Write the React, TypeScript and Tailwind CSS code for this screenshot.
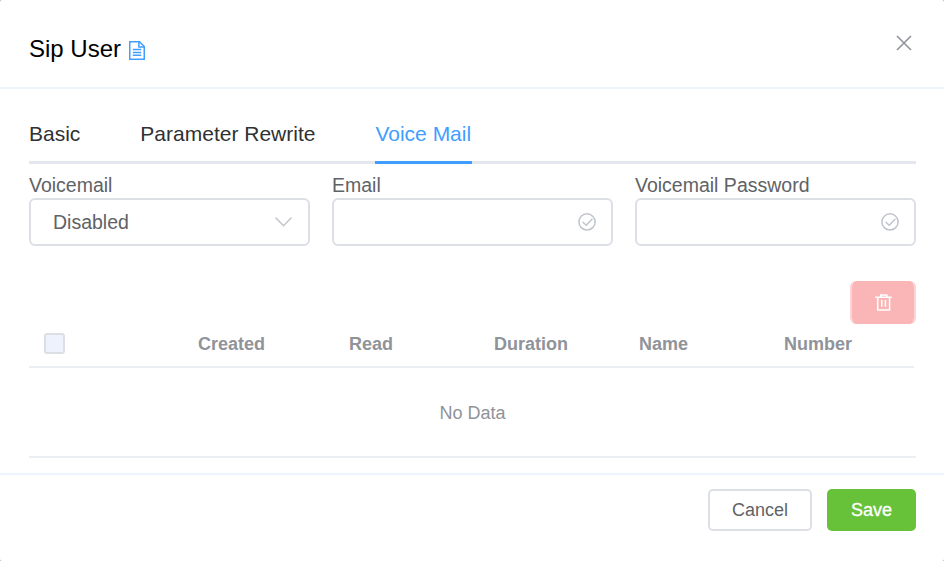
import React from "react";

const columns = [
  { label: "Created", width: "w-[151px]" },
  { label: "Read", width: "w-[145px]" },
  { label: "Duration", width: "w-[145px]" },
  { label: "Name", width: "w-[145px]" },
  { label: "Number", width: "w-[130px]" },
];

function DocumentIcon() {
  return (
    <svg className="mt-[5px] ml-2 h-[19px] w-[16px]" viewBox="0 0 16 19" fill="none" stroke="#409eff" strokeWidth="1.5">
      <path d="M.75.75H10.5L15.25 5.5V18.25H.75Z" />
      <path d="M9.9.8V6H15.2" />
      <path d="M3.8 8.6H12.2M3.8 11.4H12.2M3.8 14.2H12.2" />
    </svg>
  );
}

function CloseIcon() {
  return (
    <svg className="h-[16px] w-[16px]" viewBox="0 0 16 16" fill="none" stroke="#909399" strokeWidth="1.6">
      <path d="M1 1L15 15M15 1L1 15" />
    </svg>
  );
}

function ChevronIcon() {
  return (
    <svg className="mr-px h-[10px] w-[17px]" viewBox="0 0 17 10" fill="none" stroke="#c0c4cc" strokeWidth="1.5" strokeLinecap="round">
      <path d="M1 1L8.5 8.7L16 1" />
    </svg>
  );
}

function CheckIcon() {
  return (
    <svg className="h-[18px] w-[18px]" viewBox="0 0 18 18" fill="none" stroke="#c0c4cc" strokeWidth="1.5" strokeLinecap="round">
      <circle cx="9" cy="8.9" r="8.1" />
      <path d="M5 9.2L8.2 12.2L14 6.3" />
    </svg>
  );
}

function TrashIcon() {
  return (
    <svg className="h-[17px] w-[17px]" viewBox="0 0 17 17" fill="none" stroke="#fff" strokeWidth="1.5">
      <path d="M.3 3.3H16.7M5.7 3.3V.9H11.8V3.3M2.7 3.3V16H14.6V3.3M6.8 6V12.8M10.4 6V12.8" />
    </svg>
  );
}

function Field({ label, value, children }: { label: string; value?: string; children: React.ReactNode }) {
  return (
    <div className="w-[281px]">
      <div className="h-[27px] text-[19.5px] leading-[29px] text-[#606266]">{label}</div>
      <div className="flex h-12 items-center justify-between rounded-md border-2 border-[#dcdfe6] pr-[15px] pl-[22px] text-[19.5px] text-[#606266]">
        <span className="pt-[2px]">{value}</span>
        {children}
      </div>
    </div>
  );
}

export default function App() {
  return (
    <div className="h-[561px] w-[944px] bg-[#b0b0b0]">
      <div className="flex h-full flex-col rounded-[2px] bg-white font-['Liberation_Sans',Arial,sans-serif]">
        <header className="flex h-[89px] shrink-0 justify-between border-b-2 border-[#ecf5ff] pr-[32px] pl-[29px]">
          <div className="mt-[35px] flex h-7 text-2xl leading-7 text-black">
            <span>Sip User</span>
            <span className="mt-px"><DocumentIcon /></span>
          </div>
          <button className="mt-[35px] h-4"><CloseIcon /></button>
        </header>

        <main className="flex h-[384px] shrink-0 flex-col pr-[28px] pl-[29px]">
          <nav className="flex h-[75px] shrink-0 items-end gap-[60px] text-[21px] leading-[60px] text-[#303133] shadow-[inset_0_-3px_0_#e4e7ed]">
            <span className="h-[60px]">Basic</span>
            <span className="h-[60px]">Parameter Rewrite</span>
            <span className="h-[60px] w-[96.5px] text-[#409eff] shadow-[inset_0_-3px_0_#409eff]">Voice Mail</span>
          </nav>

          <section className="mt-[7px] flex shrink-0 justify-between">
            <Field label="Voicemail" value="Disabled"><ChevronIcon /></Field>
            <Field label="Email"><CheckIcon /></Field>
            <Field label="Voicemail Password"><CheckIcon /></Field>
          </section>

          <button className="mt-[35px] flex h-[43px] w-[66px] shrink-0 items-center justify-center self-end rounded-md border-x-2 border-[#fdd3d3] bg-[#fab6b6] bg-clip-padding">
            <TrashIcon />
          </button>

          <section className="h-[134px] shrink-0 border-b-2 border-[#ebeef5] text-lg text-[#909399]">
            <div className="mr-[2px] flex h-[44px] border-b-2 border-[#ebeef5] font-bold leading-[40px]">
              <div className="w-[169px] pt-[9px] pl-[15px]">
                <div className="h-[21px] w-[21px] rounded-[3px] border-2 border-[#dcdfe6] bg-[#edf2fc]" />
              </div>
              {columns.map((c) => (
                <div key={c.label} className={c.width}>{c.label}</div>
              ))}
            </div>
            <div className="h-[88px] text-center leading-[90px]">No Data</div>
          </section>
        </main>

        <footer className="flex h-[88px] shrink-0 justify-end gap-[15px] border-t-2 border-[#ecf5ff] pt-[14px] pr-[28px] text-lg">
          <button className="h-[42px] w-[104px] rounded-[5px] border-2 border-[#dcdfe6] leading-[38px] text-[#606266]">Cancel</button>
          <button className="h-[42px] w-[89px] rounded-[5px] bg-[#67c23a] leading-[42px] text-white [-webkit-text-stroke:0.3px_white]">Save</button>
        </footer>
      </div>
    </div>
  );
}
